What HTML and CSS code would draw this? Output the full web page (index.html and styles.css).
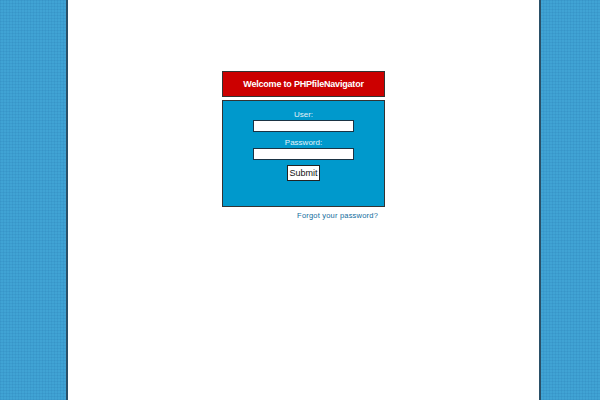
FILE: index.html
```html
<!DOCTYPE html>
<html lang="en">
<head>
    <meta charset="UTF-8">
    <title>PHPfileNavigator</title>
    <link rel="stylesheet" href="styles.css">
</head>
<body>
    <div class="page">
        <div class="login">
            <h1 class="login-title">Welcome to PHPfileNavigator</h1>
            <form class="login-form">
                <label class="field-label" for="user">User:</label>
                <input class="field-input" type="text" id="user">
                <label class="field-label" for="password">Password:</label>
                <input class="field-input" type="password" id="password">
                <button class="submit-btn" type="button">Submit</button>
            </form>
            <a class="forgot" href="#">Forgot your password?</a>
        </div>
    </div>
</body>
</html>
```
FILE: styles.css
```css
html, body {
    height: 100%;
}

body {
    margin: 0;
    overflow: hidden;
    font-family: "Liberation Sans", Arial, sans-serif;
    background-color: #40a3d4;
    background-image:
        repeating-linear-gradient(0deg, rgba(20, 90, 150, 0.1) 0 1px, transparent 1px 3px),
        repeating-linear-gradient(90deg, rgba(20, 90, 150, 0.1) 0 1px, transparent 1px 3px);
}

.page {
    box-sizing: border-box;
    width: 475px;
    height: 100%;
    margin-left: 66px;
    padding: 71px 0 0 154px;
    background: #fff;
    border-left: 2px solid #2a5068;
    border-right: 2px solid #2a5068;
}

/* Login box */
.login {
    width: 163px;
}

.login-title {
    box-sizing: border-box;
    height: 26px;
    margin: 0 0 3px;
    background: #cc0000;
    border: 1px solid #333;
    color: #fff;
    font-size: 9px;
    line-height: 24px;
    font-weight: bold;
    letter-spacing: -0.2px;
    text-align: center;
}

.login-form {
    box-sizing: border-box;
    height: 107px;
    padding-top: 9px;
    display: flex;
    flex-direction: column;
    align-items: center;
    background: #0099cc;
    border: 1px solid #333;
}

.field-label {
    color: #e4f2f8;
    font-size: 8px;
    line-height: 10px;
}

.field-input {
    box-sizing: border-box;
    width: 101px;
    height: 12px;
    margin: 0 0 6px;
    padding: 0;
    background: #fff;
    border: 1px solid #1a3344;
    border-radius: 0;
}

.submit-btn {
    box-sizing: border-box;
    width: 33px;
    height: 16px;
    margin-top: -1px;
    padding: 0;
    background: #fff;
    border: 1px solid #222;
    border-radius: 0;
    color: #111;
    font-family: inherit;
    font-size: 9px;
    line-height: 14px;
}

.forgot {
    display: block;
    margin-top: 4px;
    padding-right: 7px;
    color: #0f6c9c;
    font-size: 7.5px;
    line-height: 10px;
    letter-spacing: 0.2px;
    text-align: right;
    text-decoration: none;
}
```
